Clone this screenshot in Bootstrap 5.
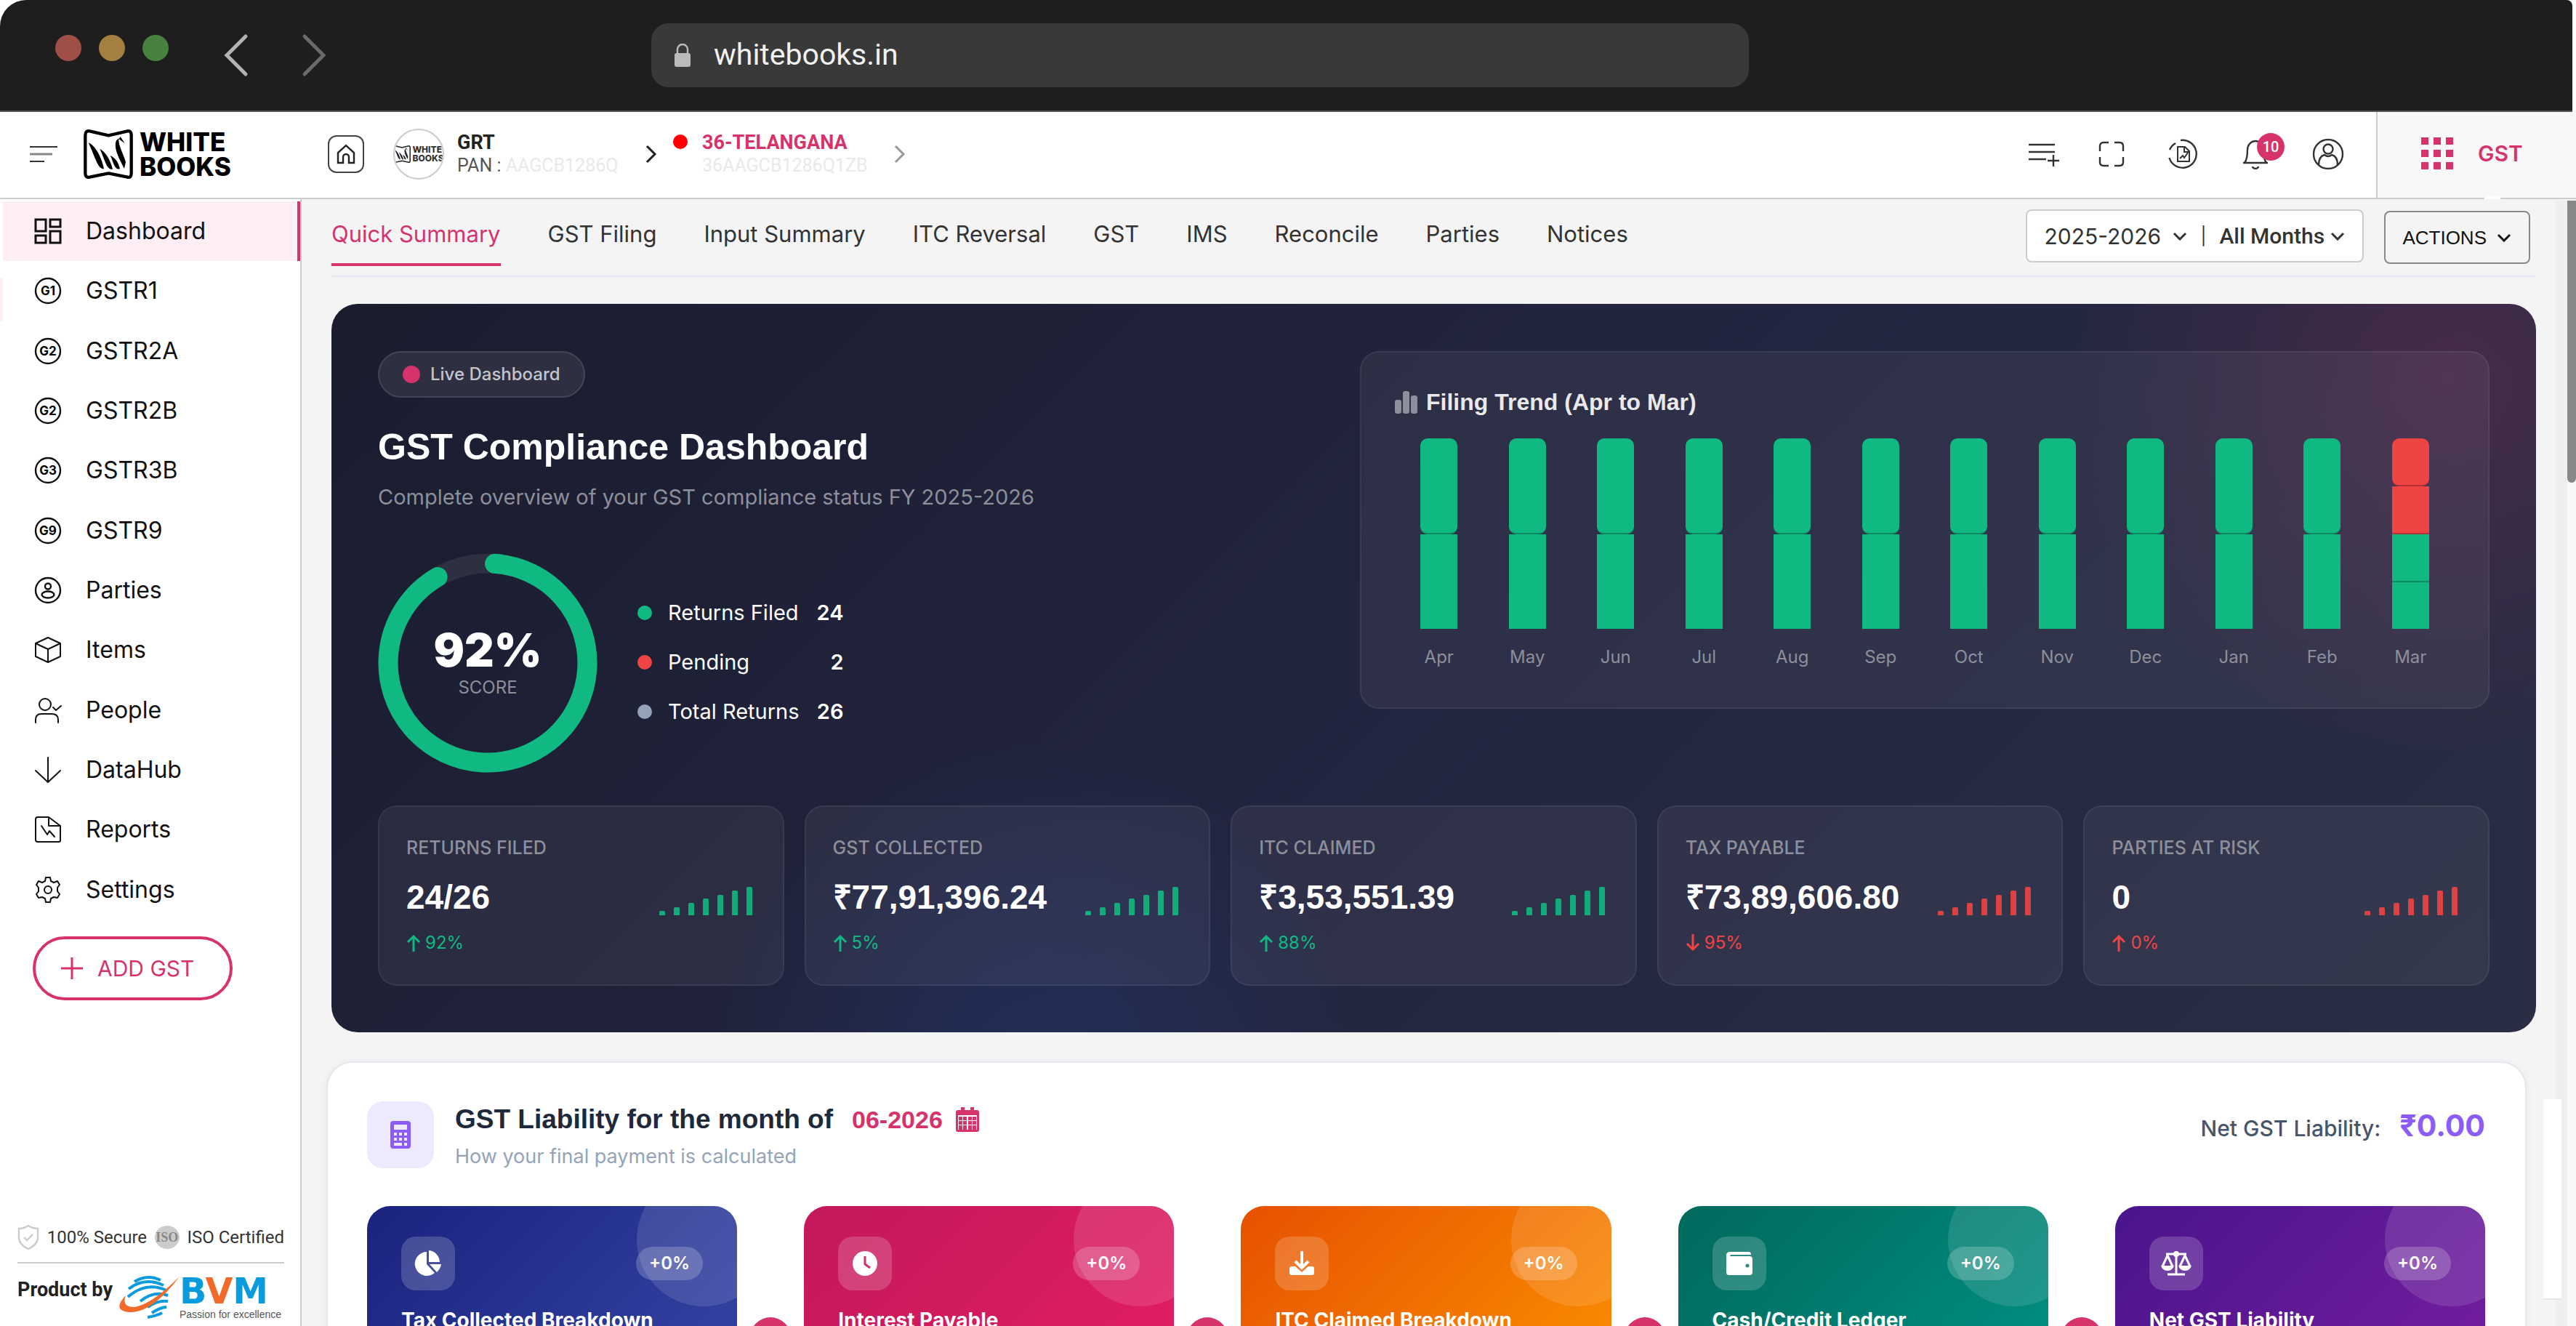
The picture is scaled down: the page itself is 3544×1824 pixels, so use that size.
<!DOCTYPE html>
<html lang="en">
<head>
<meta charset="utf-8">
<meta name="viewport" content="width=device-width, initial-scale=1">
<title>WhiteBooks – GST Compliance Dashboard</title>
<link rel="stylesheet" href="https://cdn.jsdelivr.net/npm/bootstrap@5.3.0/dist/css/bootstrap.min.css">
<script src="https://cdn.jsdelivr.net/npm/bootstrap@5.3.0/dist/js/bootstrap.bundle.min.js"></script>
<style>
:root{--pink:#d6336c;--green:#10b981;--red:#ef4444;--f-ui:Inter,"Open Sans",sans-serif;--f-rb:Roboto,"Noto Sans",sans-serif;--f-hd:"Liberation Sans",Arial,sans-serif}
body{font-family:var(--f-ui);font-size:30px;line-height:40px;color:#222;background:#fff}
a{color:inherit;text-decoration:none}
svg{display:block;flex:none}
.ln{fill:none;stroke:currentColor;stroke-width:2;stroke-linecap:round;stroke-linejoin:round}
.rb{font-family:var(--f-rb)}
.plain{background:none;border:0;padding:0;color:inherit}

/* window bar */
.chrome{background:#1e1e1e;height:154px;margin-right:5px;padding:32px 76px 0;border-radius:36px 8px 0 0;border-bottom:2px solid #555}
.lights{gap:24px;margin:16px 76px 0 0}
.lights i{width:36px;height:36px;border-radius:50%}
.address{margin-left:447px;width:1510px;height:88px;border-radius:24px;background:#393939;color:#eee;padding:0 32px;gap:32px}
.address input{font-family:var(--f-rb);font-size:41px;line-height:48px;padding-bottom:3px;color:#f1f1f1}

/* app header */
.topbar{height:120px;border-bottom:2px solid #ccc;flex:none}
.topbar>:not(.product){margin-bottom:3px}
.brand{width:409px;padding-left:41px;gap:36px}
.wordmark{font-weight:800;font-size:35px;line-height:34px;color:#000}
.homebox{width:50px;height:52px;border:2px solid #444;border-radius:12px;color:#222;margin-left:42px}
.avatar{width:70px;height:70px;border:2px solid #ccc;border-radius:50%;gap:2px;margin-left:30px;overflow:hidden}
.avatar b{font-size:12px;line-height:12px;font-weight:800;color:#333}
.who{font-family:var(--f-rb);font-size:27px;line-height:32px}
.who small{font-size:25px;line-height:32px;color:#555}
.who .faint{color:#e9e9e9}
.reddot{width:20px;height:20px;border-radius:50%;background:red;align-self:flex-start;margin-top:31px}
.tools{gap:60px;color:#333;margin-right:44px}
.bell-count{position:absolute;left:20px;top:-8px;width:38px;height:38px;border-radius:50%;background:var(--pink);color:#fff;font:500 20px/38px var(--f-rb);text-align:center}
.product{width:275px;background:#f8f8f8;border-left:2px solid #ccc;color:var(--pink);font-weight:600;gap:34px;padding:0 0 5px 60px;position:relative}
.product::after{content:"";position:absolute;left:146px;bottom:-6px;width:24px;height:8px;background:#fff;border-radius:6px 6px 0 0}

/* sidebar */
.side{width:415px;border-right:2px solid #ccc;padding-top:3px;flex:none;background:#fff}
.side .menu{min-height:988px}
.side .menu a{font-size:32px;color:#111;gap:33px;padding-left:47px}
.side .menu a.active{background:#ffeef4;border-right:4px solid var(--pink);margin-left:4px;padding-left:43px}
.side .menu a.next{background:linear-gradient(#ffeef4,#ffeef4) 0 24px/4px 82px no-repeat}
.addgst{margin:23px 0 0 45px;width:275px;height:88px;border:4px solid var(--pink);border-radius:44px;color:var(--pink);gap:19px;padding-left:34px}
.seals{font:24px/40px var(--f-rb);color:#333;gap:8px;padding-bottom:14px;border-bottom:2px solid #ccc;white-space:nowrap}
.iso{width:34px;height:32px;border-radius:50%;background:#ccc;color:#888;font:700 18px/32px "Liberation Serif",serif;text-align:center}
.sidefoot{padding:0 22px 8px 24px}
.bvm{font:700 49px/46px "DejaVu Sans",sans-serif;color:#0a9bdc}
.bvm em{font-style:normal;color:#f26a2a}
.motto{font:14px/16px var(--f-hd);color:#555;white-space:nowrap}

/* workspace */
.work{background:#f4f4f4;padding:14px 55px 0 41px;position:relative;overflow:hidden;min-width:0}
.rail{position:absolute;right:0;top:2px;width:28px;height:100%;background:linear-gradient(90deg,#eee 0,#eee 16px,#f8f8f8 16px)}
.rail i{position:absolute;right:0;top:0;width:12px;height:388px;background:#888;border-radius:0 0 6px 6px}
.sidetab{position:absolute;right:20px;bottom:36px;width:25px;height:276px;background:#fff;border-bottom:2px solid #e6e6e6}
.tabs{border-bottom:2px solid #e2e8f0;padding-bottom:13px}
.tabs ul{gap:65px;font-size:31px}
.tabs li a{display:block;padding:14px 0 20px;border-bottom:4px solid transparent;color:#333}
.tabs li a.on{color:var(--pink);border-color:var(--pink)}
.period{height:73px;border:2px solid #ccc;border-radius:8px;background:#fff;padding:0 24px 0 23px;margin-right:28px;color:#333}
.period select{appearance:none;border:0;background:none;padding:0;color:#333;outline:0}
.period .mon{font:500 30px/40px var(--f-rb)}
.period .sep{font-size:24px;margin:0 18px}
.actions{height:73px;margin-top:2px;border:2px solid #888;border-radius:8px;background:none;padding:0 24px 0 23px;font:26px/40px var(--f-hd);color:#111;gap:14px}

/* hero */
.hero{margin-top:37px;border-radius:36px;padding:65px 64px 64px;color:#fff;background:radial-gradient(circle at 96% 10%,rgba(214,51,108,.18) 0,rgba(214,51,108,0) 520px),radial-gradient(circle at 32% 104%,rgba(37,99,235,.15) 0,rgba(37,99,235,0) 440px),linear-gradient(135deg,#1a1c2e 0%,#22253f 50%,#2a2e44 100%)}
.live{height:64px;border:2px solid #434556;border-radius:32px;background:#2e3041;padding:0 32px;font-size:24px;font-weight:500;color:#c4c5cb;gap:14px}
.live i{width:24px;height:24px;border-radius:50%;background:var(--pink)}
.hero h1{font:700 50px/60px var(--f-hd);margin:38px 0 17px}
.hero .sub{font-size:29px;line-height:44px;color:#8d8f9b;margin-bottom:55px}
.dial{width:302px;height:302px;position:relative}
.dial div{position:absolute;inset:0;padding-top:4px}
.dial b{font-size:63px;line-height:64px;font-weight:900}
.dial span{font-size:24px;line-height:40px;color:#8d8f9b}
.legend td{padding:0;height:68px;font-size:29px;vertical-align:middle;color:#fff}
.legend i{display:block;width:20px;height:20px;border-radius:50%;margin-right:22px}
.legend td:last-child{font-weight:600;text-align:right;padding-left:24px}
.panel{background:rgba(255,255,255,.055);border:2px solid rgba(255,255,255,.06);border-radius:26px}
.trend{width:1554px;padding:46px 46px 52px;margin-bottom:80px}
.trend h2{font:700 32px/44px var(--f-hd);color:#e9e9ec;margin:0 0 28px;gap:12px}
.bar{width:51px;height:262px;margin:0 auto 22px}
.bar i{display:block;flex:1 1 0;background:var(--green);border-bottom:2px solid rgba(0,0,0,.25)}
.bar i:first-child{border-radius:10px}
.bar i:last-child{border-bottom:0}
.bar i.bad{background:var(--red)}
.trend .mth{font-size:24px;line-height:34px;color:#8d8f9b}
.stats{gap:28px;margin-top:45px}
.stat{flex:1 1 0;padding:40px 42px 41px 37px}
.stat .cap{font-size:25px;line-height:32px;color:#8d8f9b;font-weight:500}
.stat .val{font:700 46px/56px var(--f-hd);margin:24px 0 19px}
.stat .pct{font-size:24px;line-height:32px;gap:6px;color:var(--green)}
.spark{gap:12px;height:59px;padding-bottom:6px;margin-bottom:16px;color:var(--green);opacity:.9}
.spark i{width:8px;background:currentColor;border-radius:2px 2px 0 0}
.stat.down .spark,.stat.down .pct{color:var(--red)}

/* liability */
.liab{margin:40px 13px 0 -7px;background:#fff;border:2px solid #e2e8f0;border-radius:36px;padding:53px 55px 60px 54px;box-shadow:0 2px 12px rgba(0,0,0,.05)}
.calc{width:92px;height:92px;border-radius:22px;background:#ede9fe;color:#8b5cf6;margin-right:29px}
.liab h2{font:700 37px/50px var(--f-hd);color:#1e293b;margin:0 0 10px}
.liab .when{font:700 34px/50px var(--f-hd);color:var(--pink);margin-left:26px;gap:18px}
.liab .note{font-size:27px;line-height:32px;color:#94a3b8}
.net{font-weight:500;color:#475569;line-height:66px;gap:26px}
.net b{font-size:41px;color:#8b5cf6}
.flow{margin-top:52px}
.step{flex:1 1 0;min-height:362px;border-radius:32px;padding:42px 47px;color:#fff;position:relative;overflow:hidden}
.step::before{content:"";position:absolute;right:-46px;top:-46px;width:184px;height:184px;border-radius:50%;background:rgba(255,255,255,.12)}
.step .ico{width:74px;height:74px;border-radius:20px;background:rgba(255,255,255,.18)}
.step .chip{height:46px;border-radius:23px;padding:0 18px;background:rgba(255,255,255,.2);font-size:24px;line-height:46px;font-weight:600}
.step h3{font:700 28px/40px var(--f-ui);margin:21px 0 0;white-space:nowrap}
.link{width:92px;flex:none}
.link i{width:56px;height:56px;border-radius:50%;background:var(--pink);color:#fff;margin:auto}
.c1{background:linear-gradient(135deg,#1a237e,#3949ab)}.c2{background:linear-gradient(135deg,#c2185b,#e91e63)}.c3{background:linear-gradient(135deg,#e65100,#ff9800)}.c4{background:linear-gradient(135deg,#00695c,#009688)}.c5{background:linear-gradient(135deg,#4a148c,#7b1fa2)}
</style>
</head>
<body class="vh-100 overflow-hidden d-flex flex-column">
<svg width="0" height="0" class="position-absolute" aria-hidden="true">
<symbol id="wb" viewBox="0 0 204 204"><path fill="none" stroke="currentColor" stroke-width="13" stroke-linejoin="round" d="M7 25Q7 4 25 7L103 25 181 7Q197 4 197 25V180Q197 201 181 197L103 181 25 197Q7 201 7 180Z"/><path fill="currentColor" d="M20 55C48 65 76 118 84 163 60 166 50 120 20 55ZM67 80C92 92 112 130 120 164 95 168 90 130 67 80ZM110 108C135 120 145 140 150 163 128 168 125 140 110 108ZM146 36C140 62 168 108 174 134L168 162C148 122 122 78 135 46ZM152 30L170 58 146 40Z"/></symbol>
<symbol id="down" viewBox="0 0 20 12"><path d="M2 2l8 8 8-8" fill="none" stroke="currentColor" stroke-width="3"/></symbol>
<symbol id="up-arrow" viewBox="0 0 20 24"><path d="M10 24V4M2 11l8-8 8 8" fill="none" stroke="currentColor" stroke-width="3"/></symbol>
<symbol id="dn-arrow" viewBox="0 0 20 24"><path d="M10 0v20M2 13l8 8 8-8" fill="none" stroke="currentColor" stroke-width="3"/></symbol>
<symbol id="ring" viewBox="0 0 38 38"><circle cx="19" cy="19" r="17" fill="none" stroke="currentColor" stroke-width="2.4"/></symbol>
</svg>

<header class="chrome d-flex align-items-start flex-shrink-0">
  <div class="lights d-flex" aria-hidden="true"><i style="background:#9f4f48"></i><i style="background:#a3803f"></i><i style="background:#47823f"></i></div>
  <button class="plain" aria-label="Back" style="color:#b4b4b4"><svg width="34" height="88" viewBox="0 0 34 88"><path d="M30 18L4 44l26 26" fill="none" stroke="currentColor" stroke-width="5" stroke-linecap="round"/></svg></button>
  <button class="plain ms-5" aria-label="Forward" style="color:#6a6a6a;padding-left:25px"><svg width="34" height="88" viewBox="0 0 34 88"><path d="M4 18l26 26L4 70" fill="none" stroke="currentColor" stroke-width="5" stroke-linecap="round"/></svg></button>
  <div class="address d-flex align-items-center">
    <svg width="22" height="32" viewBox="0 0 22 32"><rect y="13" width="22" height="19" rx="3" fill="#bbb"/><path d="M4 14V8a7 7 0 0 1 14 0v6" fill="none" stroke="#bbb" stroke-width="2.4"/></svg>
    <input class="plain w-100" aria-label="Address" value="whitebooks.in">
  </div>
</header>

<div class="topbar d-flex align-items-center bg-white">
  <div class="brand d-flex align-items-center">
    <button class="plain" aria-label="Toggle menu"><svg width="38" height="24" viewBox="0 0 38 24"><path d="M0 2h38M0 22h20" stroke="#333" stroke-width="2"/><path d="M0 12h31" stroke="#888" stroke-width="3"/></svg></button>
    <a href="#" class="d-flex align-items-center text-black" style="gap:9px"><svg width="68" height="68"><use href="#wb"/></svg><span class="wordmark">WHITE<br>BOOKS</span></a>
  </div>
  <a href="#" class="homebox d-flex align-items-center justify-content-center" aria-label="Home"><svg width="28" height="28" viewBox="0 0 28 28"><path d="M3 26V12L14 2l11 10v14h-7v-8a4 4 0 0 0-8 0v8z" fill="none" stroke="currentColor" stroke-width="2.4"/></svg></a>
  <div class="d-flex align-items-center" style="margin-left:10px">
    <span class="avatar d-flex align-items-center justify-content-center text-dark"><svg width="24" height="24"><use href="#wb"/></svg><b>WHITE<br>BOOKS</b></span>
    <div class="who" style="margin-left:18px;width:259px"><b>GRT</b><small class="d-block">PAN : <span class="faint">AAGCB1286Q</span></small></div>
    <svg width="16" height="26" viewBox="0 0 16 26"><path d="M2 2l11 11L2 24" fill="none" stroke="#222" stroke-width="3"/></svg>
  </div>
  <span class="reddot" style="margin-left:22px"></span>
  <div class="who" style="margin-left:20px;width:264px"><b style="color:var(--pink)">36-TELANGANA</b><small class="d-block faint">36AAGCB1286Q1ZB</small></div>
  <svg width="16" height="26" viewBox="0 0 16 26"><path d="M2 2l11 11L2 24" fill="none" stroke="#999" stroke-width="3"/></svg>

  <div class="tools d-flex align-items-center ms-auto">
    <button class="plain" aria-label="Add list"><svg width="42" height="36" viewBox="0 0 42 36"><path d="M0 5h36M0 15h36M0 25h24M26 27h16M34 19v16" stroke="currentColor" stroke-width="2.4" fill="none"/></svg></button>
    <button class="plain" aria-label="Full screen" style="margin-left:-6px"><svg width="36" height="36" viewBox="0 0 36 36"><path d="M2 14V7q0-5 5-5h7M22 2h7q5 0 5 5v7M34 22v7q0 5-5 5h-7M14 34H7q-5 0-5-5v-7" stroke="currentColor" stroke-width="2.4" fill="none"/></svg></button>
    <button class="plain" aria-label="Reports"><svg width="42" height="42" viewBox="0 0 42 42"><path d="M17 2a19 19 0 1 1-15.500 24M2 15a19 19 0 0 1 8-9" stroke="currentColor" stroke-width="2.4" fill="none"/><path d="M13 11h10l6 6v14H13zM22 11v7h7M16 27l4-4 2 3 5-7" stroke="currentColor" stroke-width="2" fill="none"/></svg></button>
    <button class="plain position-relative" aria-label="Notifications"><svg width="36" height="42" viewBox="0 0 36 42"><path d="M1 33h34M3 33q4-5 4-18a11 12 0 0 1 22 0q0 13 4 18M14 38a4 3 0 0 0 8 0" stroke="currentColor" stroke-width="2.4" fill="none"/></svg><span class="bell-count">10</span></button>
    <button class="plain" aria-label="Account"><svg width="44" height="44" viewBox="0 0 44 44"><g stroke="currentColor" stroke-width="2.400" fill="none"><circle cx="22" cy="22" r="20"/><circle cx="22" cy="15" r="6.500"/><path d="M9 37c0-9 4-13 8-14q5 4 10 0c4 1 8 5 8 14"/></g></svg></button>
  </div>
  <a href="#" class="product d-flex align-items-center h-100"><svg width="44" height="44" viewBox="0 0 44 44" fill="currentColor"><path d="M0 0h10v10H0zM17 0h10v10H17zM34 0h10v10H34zM0 17h10v10H0zM17 17h10v10H17zM34 17h10v10H34zM0 34h10v10H0zM17 34h10v10H17zM34 34h10v10H34z"/></svg>GST</a>
</div>

<div class="d-flex flex-grow-1" style="min-height:0">
  <aside class="side d-flex flex-column">
    <nav class="menu d-flex flex-column">
      <a href="#" class="active d-flex align-items-center flex-fill"><svg width="38" height="38" viewBox="0 0 38 38" fill="none" stroke="currentColor" stroke-width="3"><path d="M2 3h14v16H2zM22 3h14v10H22zM2 25h14v10H2zM22 19h14v16H22z"/></svg>Dashboard</a>
      <a href="#" class="next d-flex align-items-center flex-fill"><svg width="38" height="38"><use href="#ring"/><text x="19" y="25" text-anchor="middle" font-size="17" font-weight="700">G1</text></svg>GSTR1</a>
      <a href="#" class="d-flex align-items-center flex-fill"><svg width="38" height="38"><use href="#ring"/><text x="19" y="25" text-anchor="middle" font-size="17" font-weight="700">G2</text></svg>GSTR2A</a>
      <a href="#" class="d-flex align-items-center flex-fill"><svg width="38" height="38"><use href="#ring"/><text x="19" y="25" text-anchor="middle" font-size="17" font-weight="700">G2</text></svg>GSTR2B</a>
      <a href="#" class="d-flex align-items-center flex-fill"><svg width="38" height="38"><use href="#ring"/><text x="19" y="25" text-anchor="middle" font-size="17" font-weight="700">G3</text></svg>GSTR3B</a>
      <a href="#" class="d-flex align-items-center flex-fill"><svg width="38" height="38"><use href="#ring"/><text x="19" y="25" text-anchor="middle" font-size="17" font-weight="700">G9</text></svg>GSTR9</a>
      <a href="#" class="d-flex align-items-center flex-fill"><svg width="38" height="38"><use href="#ring"/><g fill="none" stroke="currentColor" stroke-width="2.400"><circle cx="19" cy="13.500" r="4"/><ellipse cx="19" cy="25" rx="8.500" ry="4.500"/></g></svg>Parties</a>
      <a href="#" class="d-flex align-items-center flex-fill"><svg width="38" height="38" class="ln"><path d="M19 2l17 8v18l-17 8-17-8V10zM2 10l17 8 17-8M19 18v18"/></svg>Items</a>
      <a href="#" class="d-flex align-items-center flex-fill"><svg width="38" height="38" class="ln"><circle cx="15" cy="11" r="8"/><path d="M2 36v-4q0-8 8-8h14q9 0 9 8v4M26 15l4 4 7-6"/></svg>People</a>
      <a href="#" class="d-flex align-items-center flex-fill"><svg width="38" height="38" class="ln"><path d="M19 2v34M2 20l17 16 17-16"/></svg>DataHub</a>
      <a href="#" class="d-flex align-items-center flex-fill"><svg width="38" height="38" class="ln"><path d="M5 2h15l16 12v20q0 2-2 2H5q-3 0-3-3V5q0-3 3-3zM20 2v12h16M10 14l8 12 3-5 7 8"/></svg>Reports</a>
      <a href="#" class="d-flex align-items-center flex-fill"><svg width="38" height="38" class="ln"><path d="M16 2h6l1 5 4 2 5-2 3 5-3 4v5l3 4-3 5-5-1-4 2-1 5h-6l-1-5-4-2-5 1-3-5 3-4v-5L3 12l3-5 5 2 4-2z"/><circle cx="19" cy="19" r="5"/></svg>Settings</a>
    </nav>
    <button class="addgst d-flex align-items-center bg-white"><svg width="32" height="32" viewBox="0 0 32 32"><path d="M16 1v30M1 16h30" stroke="currentColor" stroke-width="3"/></svg>ADD GST</button>
    <div class="sidefoot mt-auto">
      <div class="seals d-flex align-items-center justify-content-between">
        <svg width="30" height="36" viewBox="0 0 30 36" fill="none" stroke="#ccc" stroke-width="2.400"><path d="M15 2q6 4 13 4v12q0 10-13 16Q2 28 2 18V6q7 0 13-4zM9 18l4 4 8-8"/></svg><span>100% Secure</span><span class="iso">ISO</span><span>ISO Certified</span>
      </div>
      <div class="d-flex align-items-start pt-3">
        <b class="rb text-nowrap" style="font-size:27px">Product by</b>
        <svg class="ms-2" width="84" height="60" viewBox="0 0 84 60"><g fill="none" stroke="#0a9bdc" stroke-width="4"><path d="M22 9Q40-2 58 7M14 19Q36 2 62 14M13 30Q38 8 66 21M30 36Q48 21 68 28M40 44Q54 34 68 36M46 52Q58 44 66 44M40 58Q52 56 60 52"/></g><path d="M10 28Q-10 49 16 51 46 52 84 2 46 40 22 44 4 44 10 28Z" fill="#f26a2a"/></svg>
        <div><div class="bvm">B<em>V</em>M</div><div class="motto">Passion for excellence</div></div>
      </div>
    </div>
  </aside>

  <main class="work flex-fill">
    <div class="tabs d-flex justify-content-between align-items-start">
      <ul class="list-unstyled d-flex m-0">
        <li><a href="#" class="on">Quick Summary</a></li><li><a href="#">GST Filing</a></li><li><a href="#">Input Summary</a></li><li><a href="#">ITC Reversal</a></li><li><a href="#">GST</a></li><li><a href="#">IMS</a></li><li><a href="#">Reconcile</a></li><li><a href="#">Parties</a></li><li><a href="#">Notices</a></li>
      </ul>
      <div class="d-flex align-items-start me-2">
        <div class="period d-flex align-items-center">
          <select aria-label="Financial year"><option>2025-2026</option></select><svg class="ms-3" width="20" height="12"><use href="#down"/></svg>
          <span class="sep">|</span>
          <select class="mon" aria-label="Month"><option>All Months</option></select><svg class="ms-2" width="20" height="12"><use href="#down"/></svg>
        </div>
        <button class="actions d-flex align-items-center">ACTIONS<svg width="20" height="12"><use href="#down"/></svg></button>
      </div>
    </div>

    <section class="hero">
      <div class="d-flex justify-content-between align-items-start">
        <div>
          <span class="live d-inline-flex align-items-center"><i></i>Live Dashboard</span>
          <h1>GST Compliance Dashboard</h1>
          <p class="sub">Complete overview of your GST compliance status FY 2025-2026</p>
          <div class="d-flex align-items-center">
            <div class="dial"><svg width="302" height="302" viewBox="0 0 302 302" fill="none" stroke-width="27"><circle cx="151" cy="151" r="137" stroke="#2e3041"/><circle cx="151" cy="151" r="137" stroke="#10b981" stroke-linecap="round" pathLength="100" stroke-dasharray="90.500 100" transform="rotate(-86 151 151)"/></svg>
              <div class="d-flex flex-column align-items-center justify-content-center"><b>92%</b><span>SCORE</span></div></div>
            <table class="legend" style="margin:0 0 2px 55px">
              <tr><td><i style="background:#10b981"></i></td><td>Returns Filed</td><td>24</td></tr>
              <tr><td><i style="background:#ef4444"></i></td><td>Pending</td><td>2</td></tr>
              <tr><td><i style="background:#94a3b8"></i></td><td>Total Returns</td><td>26</td></tr>
            </table>
          </div>
        </div>
        <div class="trend panel">
          <h2 class="d-flex align-items-center"><svg width="31" height="31" viewBox="0 0 31 31" fill="#8d8f9b"><rect y="12" width="9" height="19" rx="3"/><rect x="11" width="9" height="31" rx="3"/><rect x="22" y="6" width="9" height="25" rx="3"/></svg>Filing Trend (Apr to Mar)</h2>
          <div class="d-flex text-center mth">
            <div class="flex-fill w-100"><div class="bar d-flex flex-column"><i></i><i></i></div>Apr</div>
            <div class="flex-fill w-100"><div class="bar d-flex flex-column"><i></i><i></i></div>May</div>
            <div class="flex-fill w-100"><div class="bar d-flex flex-column"><i></i><i></i></div>Jun</div>
            <div class="flex-fill w-100"><div class="bar d-flex flex-column"><i></i><i></i></div>Jul</div>
            <div class="flex-fill w-100"><div class="bar d-flex flex-column"><i></i><i></i></div>Aug</div>
            <div class="flex-fill w-100"><div class="bar d-flex flex-column"><i></i><i></i></div>Sep</div>
            <div class="flex-fill w-100"><div class="bar d-flex flex-column"><i></i><i></i></div>Oct</div>
            <div class="flex-fill w-100"><div class="bar d-flex flex-column"><i></i><i></i></div>Nov</div>
            <div class="flex-fill w-100"><div class="bar d-flex flex-column"><i></i><i></i></div>Dec</div>
            <div class="flex-fill w-100"><div class="bar d-flex flex-column"><i></i><i></i></div>Jan</div>
            <div class="flex-fill w-100"><div class="bar d-flex flex-column"><i></i><i></i></div>Feb</div>
            <div class="flex-fill w-100"><div class="bar d-flex flex-column"><i class="bad"></i><i class="bad"></i><i></i><i></i></div>Mar</div>
          </div>
        </div>
      </div>

      <div class="stats d-flex">
        <div class="stat panel"><div class="cap">RETURNS FILED</div><div class="d-flex justify-content-between align-items-end"><div class="val">24/26</div><div class="spark d-flex align-items-end"><i style="height:6px"></i><i style="height:11px"></i><i style="height:17px"></i><i style="height:23px"></i><i style="height:28px"></i><i style="height:34px"></i><i style="height:39px"></i></div></div><div class="pct d-flex align-items-center"><svg width="20" height="24"><use href="#up-arrow"/></svg>92%</div></div>
        <div class="stat panel"><div class="cap">GST COLLECTED</div><div class="d-flex justify-content-between align-items-end"><div class="val">₹77,91,396.24</div><div class="spark d-flex align-items-end"><i style="height:6px"></i><i style="height:11px"></i><i style="height:17px"></i><i style="height:23px"></i><i style="height:28px"></i><i style="height:34px"></i><i style="height:39px"></i></div></div><div class="pct d-flex align-items-center"><svg width="20" height="24"><use href="#up-arrow"/></svg>5%</div></div>
        <div class="stat panel"><div class="cap">ITC CLAIMED</div><div class="d-flex justify-content-between align-items-end"><div class="val">₹3,53,551.39</div><div class="spark d-flex align-items-end"><i style="height:6px"></i><i style="height:11px"></i><i style="height:17px"></i><i style="height:23px"></i><i style="height:28px"></i><i style="height:34px"></i><i style="height:39px"></i></div></div><div class="pct d-flex align-items-center"><svg width="20" height="24"><use href="#up-arrow"/></svg>88%</div></div>
        <div class="stat panel down"><div class="cap">TAX PAYABLE</div><div class="d-flex justify-content-between align-items-end"><div class="val">₹73,89,606.80</div><div class="spark d-flex align-items-end"><i style="height:6px"></i><i style="height:11px"></i><i style="height:17px"></i><i style="height:23px"></i><i style="height:28px"></i><i style="height:34px"></i><i style="height:39px"></i></div></div><div class="pct d-flex align-items-center"><svg width="20" height="24"><use href="#dn-arrow"/></svg>95%</div></div>
        <div class="stat panel down"><div class="cap">PARTIES AT RISK</div><div class="d-flex justify-content-between align-items-end"><div class="val">0</div><div class="spark d-flex align-items-end"><i style="height:6px"></i><i style="height:11px"></i><i style="height:17px"></i><i style="height:23px"></i><i style="height:28px"></i><i style="height:34px"></i><i style="height:39px"></i></div></div><div class="pct d-flex align-items-center"><svg width="20" height="24"><use href="#up-arrow"/></svg>0%</div></div>
      </div>
    </section>

    <section class="liab">
      <div class="d-flex align-items-start">
        <div class="calc d-flex align-items-center justify-content-center"><svg width="28" height="38" viewBox="0 0 28 38"><rect width="28" height="38" rx="4" fill="currentColor"/><path fill="#ede9fe" d="M5 5h18v7H5zM5 16h4v4H5zM12 16h4v4h-4zM19 16h4v4h-4zM5 23h4v4H5zM12 23h4v4h-4zM19 23h4v4h-4zM5 30h11v4H5zM19 30h4v4h-4z"/></svg></div>
        <div>
          <div class="d-flex"><h2>GST Liability for the month of</h2><button class="plain when d-flex align-items-center align-self-start">06-2026<svg width="32" height="34" viewBox="0 0 32 34"><path fill="currentColor" d="M3 4h4V0h5v4h8V0h5v4h4q3 0 3 3v24q0 3-3 3H3q-3 0-3-3V7q0-3 3-3z"/><path fill="#fff" d="M3 11h26v2H3zM3 18h26v1H3zM3 24h26v1H3zM9 12h1v19H9zM15 12h2v19h-2zM22 12h1v19h-1zM3 12h1v19H3zM28 12h1v19h-1z"/></svg></button></div>
          <div class="note">How your final payment is calculated</div>
        </div>
        <div class="net d-flex align-items-baseline ms-auto">Net GST Liability: <b>₹0.00</b></div>
      </div>
      <div class="flow d-flex align-items-center">
        <article class="step c1"><div class="d-flex justify-content-between align-items-center position-relative"><span class="ico d-flex align-items-center justify-content-center"><svg width="38" height="36" viewBox="0 0 38 36" fill="#fff"><path d="M17 2v17l11 12A16.500 16.500 0 1 1 17 2z"/><path d="M20 0a16.500 16.500 0 0 1 15 16H20zM21 19h16q-1 6-6 11z"/></svg></span><span class="chip">+0%</span></div><h3>Tax Collected Breakdown</h3></article>
        <div class="link d-flex"><i></i></div>
        <article class="step c2"><div class="d-flex justify-content-between align-items-center position-relative"><span class="ico d-flex align-items-center justify-content-center"><svg width="36" height="36" viewBox="0 0 36 36"><circle cx="18" cy="18" r="17" fill="#fff"/><path d="M18 8v11l7 5" fill="none" stroke="#c9346f" stroke-width="3"/></svg></span><span class="chip">+0%</span></div><h3>Interest Payable</h3></article>
        <div class="link d-flex"><i></i></div>
        <article class="step c3"><div class="d-flex justify-content-between align-items-center position-relative"><span class="ico d-flex align-items-center justify-content-center"><svg width="36" height="36" viewBox="0 0 36 36"><path d="M4 22h5l9 8 9-8h5q3 0 3 3v6q0 3-3 3H4q-3 0-3-3v-6q0-3 3-3z" fill="#fff"/><path d="M18 1v22M9 15l9 9 9-9" fill="none" stroke="#fff" stroke-width="4"/></svg></span><span class="chip">+0%</span></div><h3>ITC Claimed Breakdown</h3></article>
        <div class="link d-flex"><i></i></div>
        <article class="step c4"><div class="d-flex justify-content-between align-items-center position-relative"><span class="ico d-flex align-items-center justify-content-center"><svg width="36" height="32" viewBox="0 0 36 32"><path d="M5 0h26q3 0 3 4H7q-2 0-2 2h27q4 0 4 4v18q0 4-4 4H4q-4 0-4-4V5q0-5 5-5z" fill="#fff"/><circle cx="29" cy="19" r="2.500" fill="#2a8a7e"/></svg></span><span class="chip">+0%</span></div><h3>Cash/Credit Ledger</h3></article>
        <div class="link d-flex"><i></i></div>
        <article class="step c5"><div class="d-flex justify-content-between align-items-center position-relative"><span class="ico d-flex align-items-center justify-content-center"><svg width="44" height="36" viewBox="0 0 44 36"><path d="M8 5h28M22 1v32M10 33h24M10 7L3 22M10 7l7 15M34 7l-7 15M34 7l7 15" stroke="#fff" stroke-width="3" fill="none"/><path d="M1 21h18q-2 7-9 7t-9-7zM25 21h18q-2 7-9 7t-9-7z" fill="#fff"/><circle cx="22" cy="5" r="4" fill="#fff"/></svg></span><span class="chip">+0%</span></div><h3>Net GST Liability</h3></article>
      </div>
    </section>
    <div class="rail" aria-hidden="true"><i></i></div>
    <div class="sidetab" aria-hidden="true"></div>
  </main>
</div>
</body>
</html>
